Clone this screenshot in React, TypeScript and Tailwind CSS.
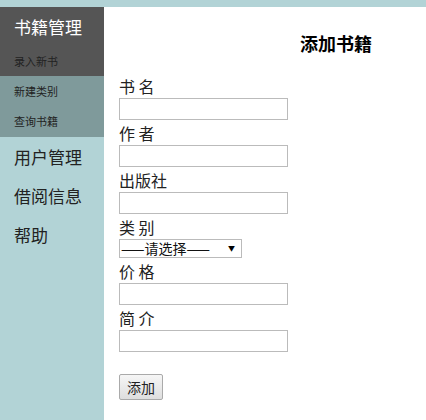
const font = { fontFamily: '"Microsoft YaHei", "Noto Sans CJK SC", sans-serif' };

const fields = [
  { label: '书 名' },
  { label: '作 者' },
  { label: '出版社' },
  { label: '类 别', select: true },
  { label: '价 格' },
  { label: '简 介' },
];

function Field({ label, select }: { label: string; select?: boolean }) {
  return (
    <div>
      <label className="block h-[25px] text-[16px] leading-[26px] text-[#222]">{label}</label>
      {select ? (
        <div className="relative w-[123px]">
          <select className="block h-[19px] w-[123px] appearance-none border border-[#bbb] bg-white pl-[1px] text-[14px] leading-[17px] text-[#111] outline-none">
            <option>——请选择——</option>
          </select>
          <span className="pointer-events-none absolute right-[7px] top-[6px] text-[7px] leading-[7px] text-black">▼</span>
        </div>
      ) : (
        <input
          type="text"
          className="block h-[22px] w-[169px] border border-[#bbb] bg-white px-1 text-[13px] outline-none"
        />
      )}
    </div>
  );
}

export default function App() {
  return (
    <div className="flex min-h-[420px] flex-col bg-[#b2d3d6]" style={font}>
      <div className="h-[7px] shrink-0" />
      <div className="flex flex-1">
        {/* sidebar */}
        <aside className="w-[104px] shrink-0">
          <div className="bg-[#555555]">
            <div className="h-[39px] pl-[14px] pt-[9px] text-[17px] leading-[22px] text-white">书籍管理</div>
            <div className="h-[30px] pl-[14px] text-[11px] leading-[30px] text-[#222]">录入新书</div>
          </div>
          <div className="bg-[#7f9a9b]">
            <div className="h-[30px] pl-[14px] text-[11px] leading-[30px] text-[#222]">新建类别</div>
            <div className="h-[31px] pl-[14px] text-[11px] leading-[31px] text-[#222]">查询书籍</div>
          </div>
          <div>
            {['用户管理', '借阅信息', '帮助'].map((t) => (
              <div key={t} className="h-[39px] pl-[14px] text-[17px] leading-[39px] text-[#222]">
                {t}
              </div>
            ))}
          </div>
        </aside>

        {/* main */}
        <main className="flex-1 bg-white pl-[15px]">
          <h2 className="h-[66px] pl-[181px] pt-[24px] text-[18px] font-bold leading-[24px] text-black">添加书籍</h2>
          <div className="flex flex-col">
            {fields.map((f) => (
              <Field key={f.label} label={f.label} select={f.select} />
            ))}
          </div>
          <button className="mt-[22px] h-[26px] w-[44px] rounded-[2px] border border-[#aaa] bg-gradient-to-b from-[#f6f6f6] to-[#dedede] text-[14px] leading-[24px] text-[#222]">
            添加
          </button>
        </main>
      </div>
    </div>
  );
}
